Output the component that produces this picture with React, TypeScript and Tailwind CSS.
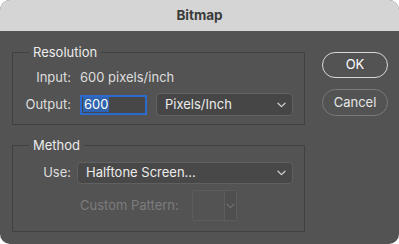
import React from "react";

const Chevron = ({ className = "" }: { className?: string }) => (
  <svg width="9" height="6" viewBox="0 0 9 6" className={className}>
    <path d="M1 1.2 L4.5 4.6 L8 1.2" fill="none" stroke="currentColor" strokeWidth="1.3" strokeLinecap="round" strokeLinejoin="round" />
  </svg>
);

export default function App() {
  return (
    <div className="w-[399px] h-[244px] bg-white" style={{ fontFamily: "Inter, 'Noto Sans', sans-serif" }}>
      <div className="w-[399px] h-[244px] rounded-[10px] overflow-hidden bg-[#535353] flex flex-col">
        <div className="h-[31px] shrink-0 bg-[#d5d5d5] flex items-center justify-center text-[13.5px] font-bold text-[#3b3b3b]">
          Bitmap
        </div>
        <div className="flex pl-[12px] pt-[13px]">
          <div className="w-[293px] flex flex-col">
            <fieldset className="border border-[#404040] h-[81px] flex flex-col">
              <legend className="ml-[16px] px-[4px] h-[16px] leading-[16px] text-[13px] text-[#ececec]">Resolution</legend>
              <div className="flex items-center h-[20px] mt-[8px] text-[13px] text-[#dedede]">
                <div className="w-[58px] text-right">Input:</div>
                <div className="ml-[9px]">600 pixels/inch</div>
              </div>
              <div className="flex items-center h-[23px] mt-[5px] text-[13px] text-[#dedede]">
                <div className="w-[58px] text-right">Output:</div>
                <div className="ml-[9px] w-[67px] h-[20px] border-2 border-[#2b6bd0] bg-[#474747] flex items-center pl-[1px]">
                  <span className="bg-[#2f63ad] text-white leading-[15px] px-[1px]">600</span>
                </div>
                <div className="ml-[9px] w-[137px] h-[23px] rounded-[4px] border border-[#626262] bg-[#464646] flex items-center justify-between pl-[8px] pr-[6px] text-[#ececec]">
                  <span>Pixels/Inch</span>
                  <Chevron className="text-[#cfcfcf]" />
                </div>
              </div>
            </fieldset>
            <fieldset className="mt-[12px] border border-[#404040] h-[95px] flex flex-col">
              <legend className="ml-[16px] px-[4px] h-[16px] leading-[16px] text-[13px] text-[#ececec]">Method</legend>
              <div className="flex items-center h-[22px] mt-[9px] text-[13px] text-[#dedede]">
                <div className="w-[58px] text-right">Use:</div>
                <div className="ml-[6px] w-[216px] h-[22px] rounded-[4px] border border-[#606060] bg-[#484848] flex items-center justify-between pl-[8px] pr-[6px] text-[#ececec]">
                  <span>Halftone Screen...</span>
                  <Chevron className="text-[#cfcfcf]" />
                </div>
              </div>
              <div className="flex items-center h-[31px] mt-[6px] text-[13px] text-[#7c7c7c]">
                <div className="ml-[67px] w-[112px]">Custom Pattern:</div>
                <div className="w-[45px] h-[31px] rounded-[3px] border border-[#5d5d5d] flex">
                  <div className="w-[32px] h-full border-r border-[#5d5d5d]" />
                  <div className="flex-1 bg-[#4f4f4f] flex items-center justify-center">
                    <Chevron className="text-[#6d6d6d]" />
                  </div>
                </div>
              </div>
            </fieldset>
          </div>
          <div className="ml-[17px] pt-[8px] flex flex-col">
            <div className="w-[66px] h-[26px] rounded-full border-[1.5px] border-[#d8d8d8] flex items-center justify-center text-[13px] text-white">
              OK
            </div>
            <div className="mt-[11px] w-[66px] h-[27px] rounded-full border-[1.5px] border-[#7a7a7a] flex items-center justify-center text-[13px] text-[#e6e6e6]">
              Cancel
            </div>
          </div>
        </div>
      </div>
    </div>
  );
}
